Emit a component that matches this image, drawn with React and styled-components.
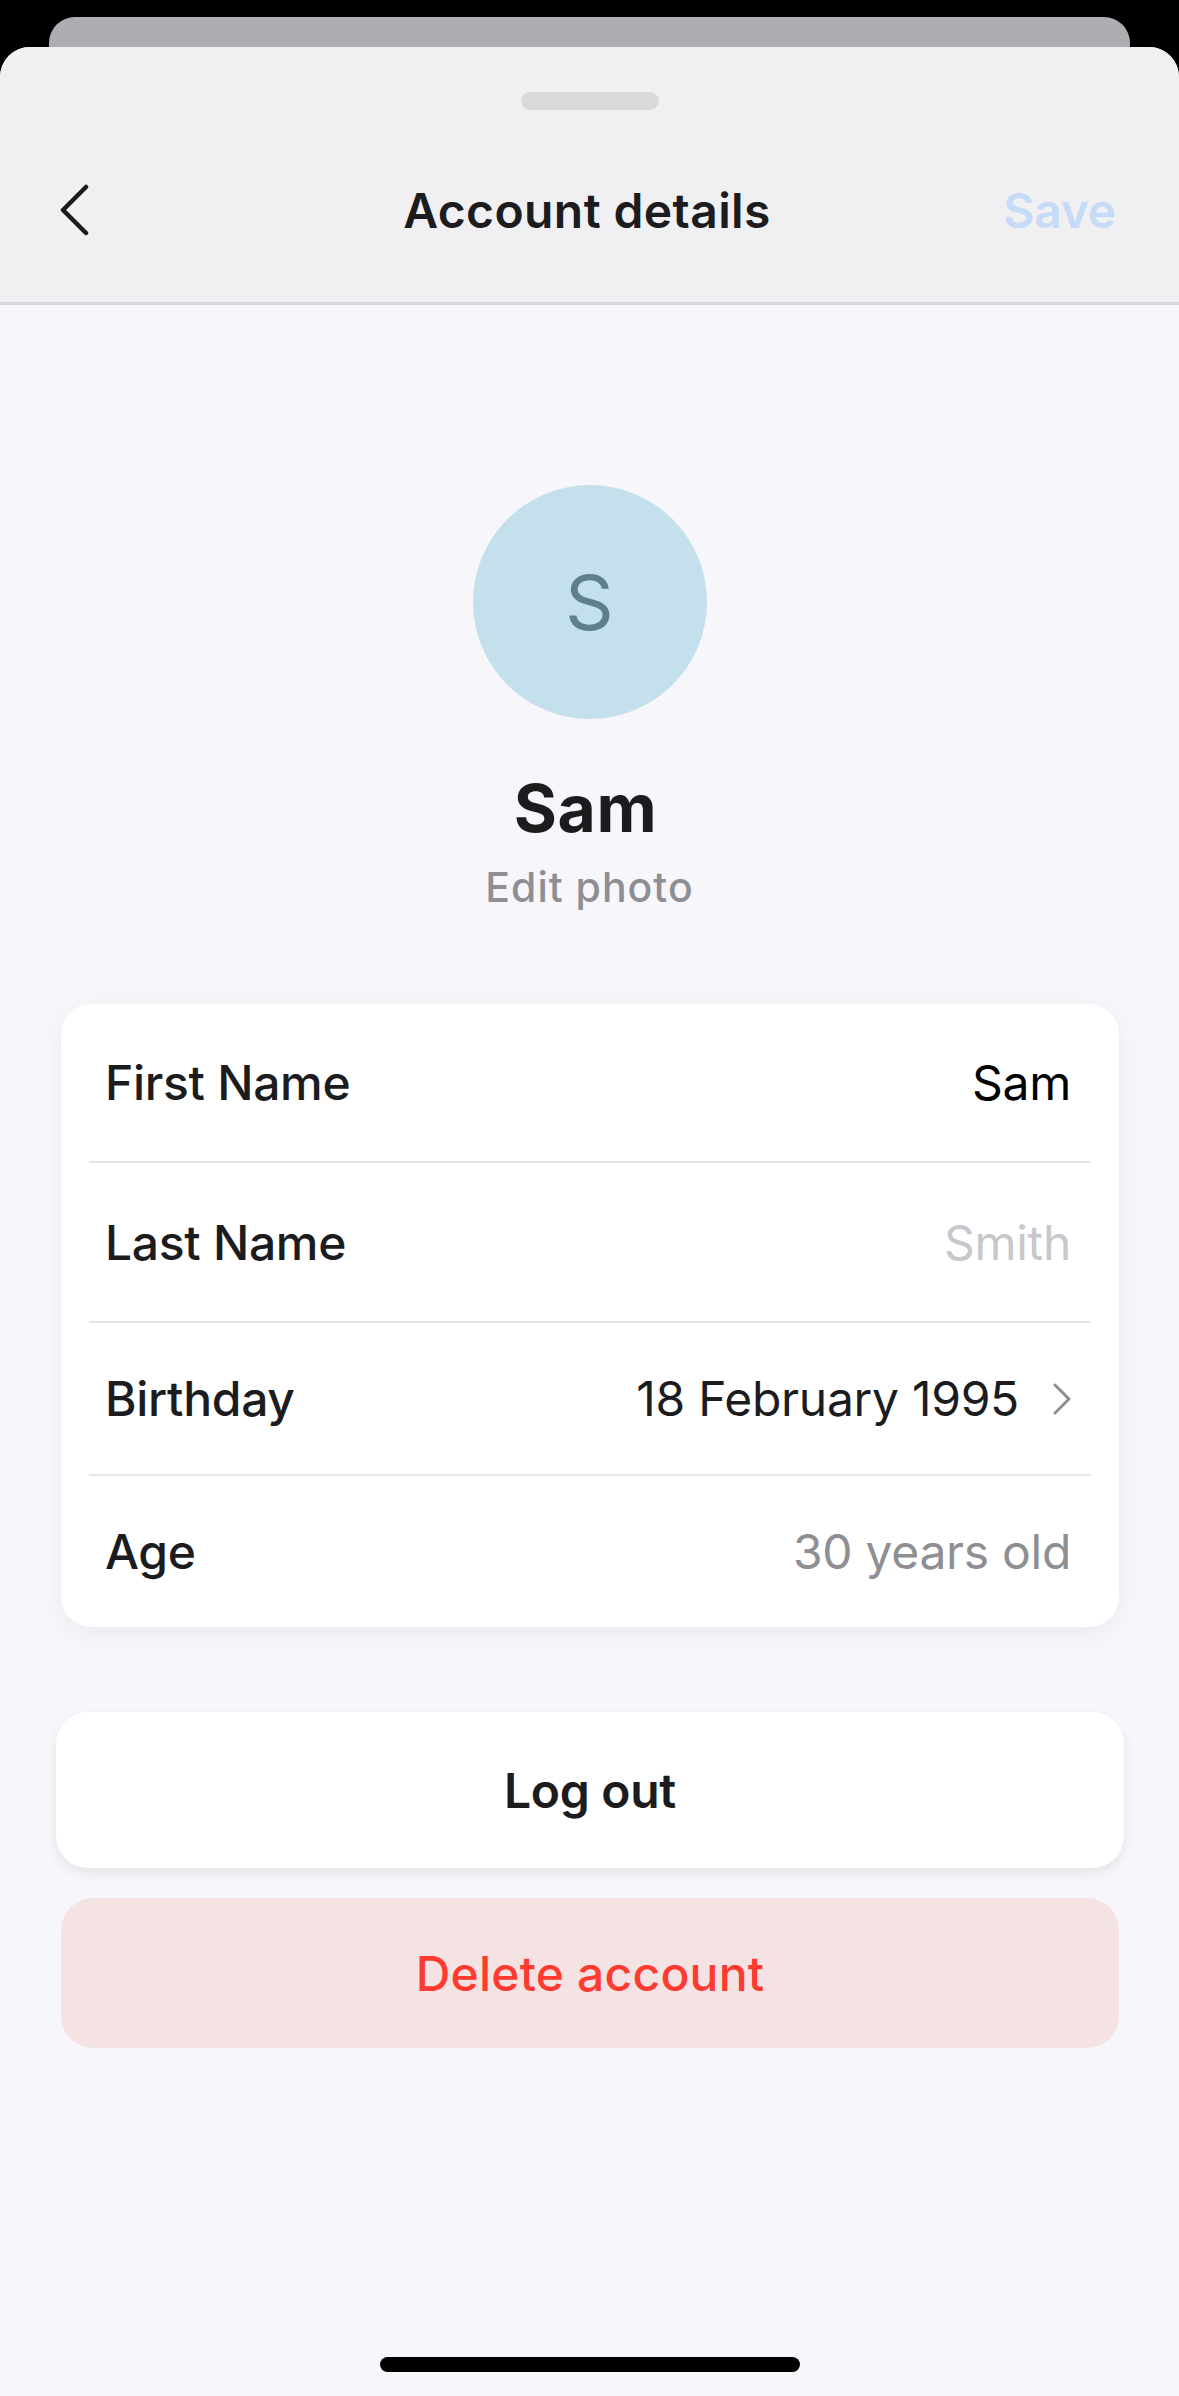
import React from 'react';
import styled, { createGlobalStyle } from 'styled-components';

const GlobalStyle = createGlobalStyle`
  html, body {
    margin: 0;
    padding: 0;
    background: #000;
  }

  body {
    font-family: Inter, "Noto Sans", "Liberation Sans", sans-serif;
    -webkit-font-smoothing: antialiased;
  }
`;

const Screen = styled.div`
  display: flex;
  flex-direction: column;
  height: 2396px;
  padding-top: 17px;
  box-sizing: border-box;
  background: #000;
`;

const BackCard = styled.div`
  height: 30px;
  margin: 0 49px;
  background: #aeaeb2;
  border-radius: 26px 26px 0 0;
`;

const Sheet = styled.div`
  flex: 1;
  display: flex;
  flex-direction: column;
  background: #f7f7fb;
  border-radius: 30px 30px 0 0;
  overflow: hidden;
`;

const Header = styled.header`
  display: flex;
  flex-direction: column;
  align-items: center;
  padding: 45px 0 42px;
  background: #f0f0f2;
  border-bottom: 3px solid #d8d8dc;
`;

const Grabber = styled.div`
  width: 138px;
  height: 18px;
  border-radius: 9px;
  background: #d9d9dc;
`;

const NavBar = styled.nav`
  display: grid;
  grid-template-columns: 1fr auto 1fr;
  align-items: center;
  width: 100%;
  height: 100px;
  margin-top: 50px;
  padding: 0 63px 0 58px;
  box-sizing: border-box;

  .back {
    display: flex;
    align-items: center;
  }

  .title {
    color: #1c1c1e;
    font-size: 48px;
    font-weight: 600;
    letter-spacing: 0.4px;
  }

  .save {
    justify-self: end;
    color: #c5dbf7;
    font-size: 48px;
    font-weight: 600;
    letter-spacing: -0.2px;
  }
`;

const Profile = styled.section`
  display: flex;
  flex-direction: column;
  align-items: center;
  padding-top: 180px;

  .name {
    margin-top: 50px;
    padding-right: 8px;
    color: #1c1c1e;
    font-size: 66px;
    font-weight: 700;
    line-height: 1.21;
    letter-spacing: 0.6px;
  }

  .edit {
    margin-top: 14px;
    color: #8e8e93;
    font-size: 41px;
    font-weight: 500;
    line-height: 1.21;
    letter-spacing: 1px;
  }
`;

const Avatar = styled.div`
  display: flex;
  align-items: center;
  justify-content: center;
  width: 234px;
  height: 234px;
  border-radius: 50%;
  background: #c4e0ec;
  color: #5f7f8d;
  font-size: 76px;
  font-weight: 400;
`;

const Card = styled.div`
  margin: 92px 60px 0 61px;
  background: #fff;
  border-radius: 30px;
  box-shadow: 0 6px 24px rgba(0, 0, 0, 0.05);
  overflow: hidden;
`;

const Row = styled.div`
  display: flex;
  align-items: center;
  justify-content: space-between;
  box-sizing: border-box;
  height: ${(p) => p.$height}px;
  padding: 0 48px 0 44px;
  font-size: 48px;
  letter-spacing: -0.3px;

  & + & {
    border-top: 2.5px solid #e5e5ea;
    margin: 0 28px;
    padding: 0 20px 0 16px;
  }

  .label {
    color: #1c1c1e;
    font-weight: 500;
  }

  .value {
    display: flex;
    align-items: center;
    gap: 34px;
    color: ${(p) => p.$tone};
  }
`;

const Actions = styled.div`
  display: flex;
  flex-direction: column;
  gap: 30px;
  margin-top: 85px;
`;

const Button = styled.button`
  display: flex;
  align-items: center;
  justify-content: center;
  height: ${(p) => (p.$danger ? 150 : 156)}px;
  margin: ${(p) => (p.$danger ? '0 60px 0 61px' : '0 55px 0 56px')};
  border: none;
  border-radius: 32px;
  background: ${(p) => (p.$danger ? '#f5e3e4' : '#fff')};
  box-shadow: ${(p) => (p.$danger ? 'none' : '0 5px 12px rgba(0, 0, 0, 0.08)')};
  color: ${(p) => (p.$danger ? '#ff3b30' : '#1c1c1e')};
  font-family: inherit;
  font-size: 48px;
  font-weight: ${(p) => (p.$danger ? 500 : 600)};
  letter-spacing: ${(p) => (p.$danger ? '0.2px' : '-0.3px')};
`;

const HomeIndicator = styled.div`
  align-self: center;
  width: 420px;
  height: 15px;
  margin: auto 0 24px;
  border-radius: 8px;
  background: #000;
`;

function Chevron({ left }) {
  if (left) {
    return (
      <svg width="32" height="52" viewBox="0 0 32 52" fill="none">
        <path d="M28 3 L5 26 L28 49" stroke="#1c1c1e" strokeWidth="4.5" strokeLinecap="round" strokeLinejoin="round" />
      </svg>
    );
  }
  return (
    <svg width="18" height="32" viewBox="0 0 18 32" fill="none">
      <path d="M2 2 L16 16 L2 30" stroke="#8e8e93" strokeWidth="3" strokeLinecap="round" strokeLinejoin="round" />
    </svg>
  );
}

const rows = [
  { label: 'First Name', value: 'Sam', tone: '#000', height: 157 },
  { label: 'Last Name', value: 'Smith', tone: '#c7c7cc', height: 160 },
  { label: 'Birthday', value: '18 February 1995', tone: '#1c1c1e', height: 153, arrow: true },
  { label: 'Age', value: '30 years old', tone: '#8e8e93', height: 153 },
];

function App() {
  return (
    <>
      <GlobalStyle />
      <Screen>
        <BackCard />
        <Sheet>
          <Header>
            <Grabber />
            <NavBar>
              <span className="back"><Chevron left /></span>
              <span className="title">Account details</span>
              <span className="save">Save</span>
            </NavBar>
          </Header>

          <Profile>
            <Avatar>S</Avatar>
            <div className="name">Sam</div>
            <div className="edit">Edit photo</div>
          </Profile>

          <Card>
            {rows.map((r) => (
              <Row key={r.label} $height={r.height} $tone={r.tone}>
                <span className="label">{r.label}</span>
                <span className="value">
                  {r.value}
                  {r.arrow && <Chevron />}
                </span>
              </Row>
            ))}
          </Card>

          <Actions>
            <Button>Log out</Button>
            <Button $danger>Delete account</Button>
          </Actions>

          <HomeIndicator />
        </Sheet>
      </Screen>
    </>
  );
}

export default App;
